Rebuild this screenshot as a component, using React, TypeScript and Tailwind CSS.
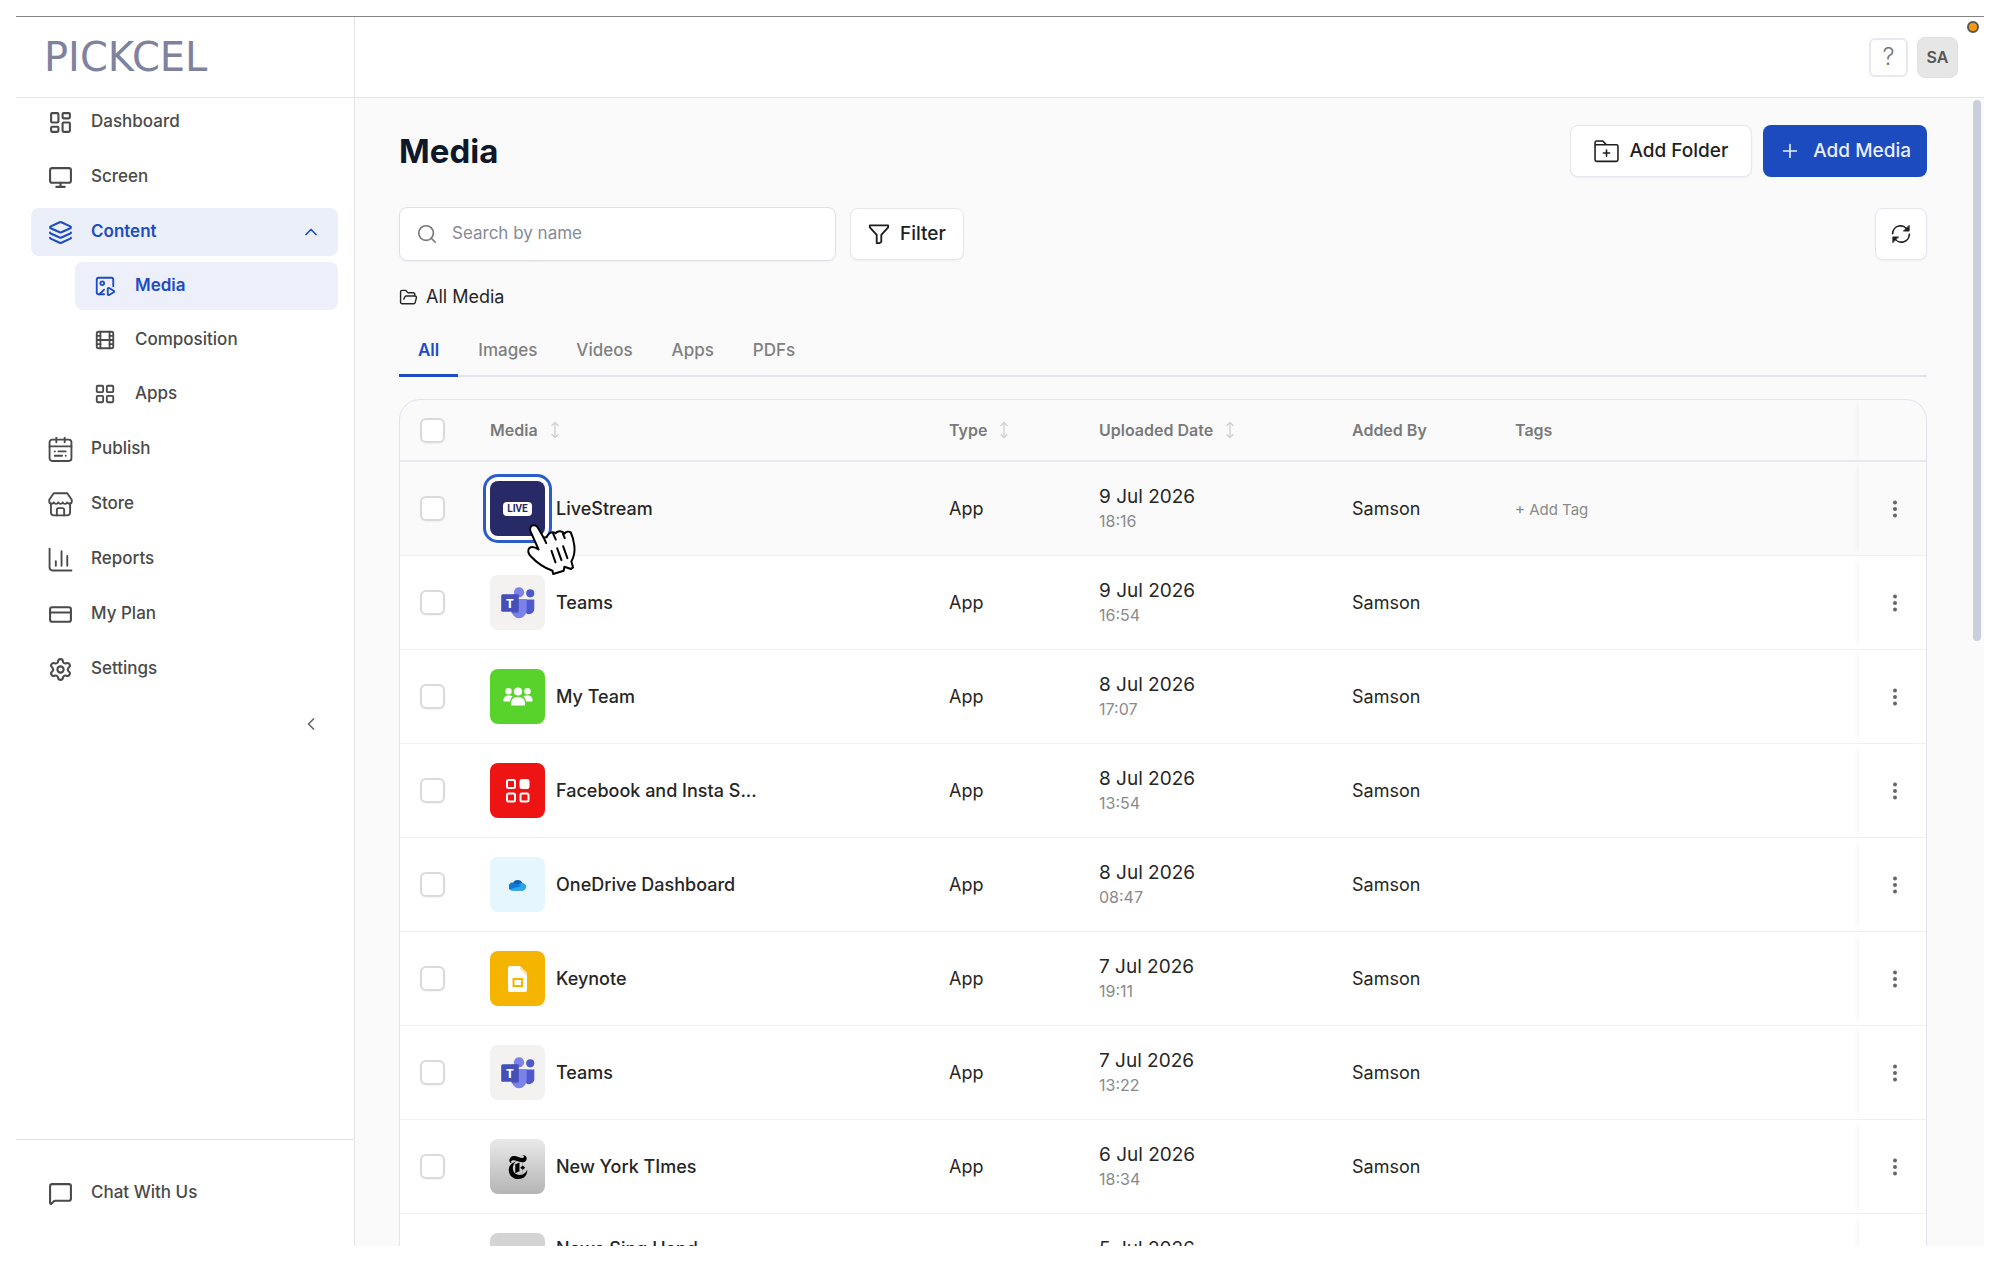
import type { ComponentType, ReactNode } from "react";
import {
  ChevronLeft,
  ChevronUp,
  CreditCard,
  Film,
  FolderOpen,
  ImagePlay,
  Layers,
  LayoutDashboard,
  LayoutGrid,
  MessageSquare,
  Monitor,
  MoveVertical,
  Plus,
  Search,
  Settings,
} from "lucide-react";
import { SiNewyorktimes } from "react-icons/si";

type IconProps = { className?: string };

const stroke = {
  viewBox: "0 0 24 24",
  fill: "none",
  stroke: "currentColor",
  strokeWidth: 2,
  strokeLinecap: "round",
  strokeLinejoin: "round",
} as const;

const PublishIcon = ({ className }: IconProps) => (
  <svg {...stroke} strokeWidth={1.8} className={className} aria-hidden="true">
    <rect x="1.5" y="2.5" width="21" height="20.5" rx="2.5" />
    <path d="M1.5 9h21M8 0v5M16 0v5M6.5 13.8h.1M10 13.8h7M6.5 18h7M17 18h.1" />
  </svg>
);

const StoreIcon = ({ className }: IconProps) => (
  <svg {...stroke} strokeWidth={1.8} className={className} aria-hidden="true">
    <path d="M2.8 11v8.5a3 3 0 0 0 3 3h12.4a3 3 0 0 0 3-3V11" />
    <path d="M5.5 1.2h13l4.3 6.3v1.7c0 2.6-3.4 2.6-4.3.8-.9 1.8-3.6 1.8-4.4 0-.8 1.8-3.4 1.8-4.2 0-.8 1.8-3.5 1.8-4.4 0-.9 1.8-4.3 1.8-4.3-.8V7.5z" />
    <path d="M8.5 22.5V17a1.500 1.500 0 0 1 1.500-1.500h4a1.500 1.500 0 0 1 1.500 1.500v5.500" />
  </svg>
);

const ReportsIcon = ({ className }: IconProps) => (
  <svg {...stroke} strokeWidth={1.8} className={className} aria-hidden="true">
    <path d="M1.5 1.5v18a3 3 0 0 0 3 3h18M7.5 13.5V18M13 4v14M18.5 8.5V18" />
  </svg>
);

const FolderPlusIcon = ({ className }: IconProps) => (
  <svg {...stroke} strokeWidth={1.5} className={className} aria-hidden="true">
    <path d="M1 6V3.5A1.500 1.500 0 0 1 2.500 2h6L12 5.500h9.500A1.500 1.500 0 0 1 23 7v13a1.500 1.500 0 0 1-1.500 1.500h-19A1.500 1.500 0 0 1 1 20zM1 5.500h11M12 10.500v6M9 13.500h6" />
  </svg>
);

const FunnelIcon = ({ className }: IconProps) => (
  <svg {...stroke} className={className} aria-hidden="true">
    <path d="M2 2.5h20v2.200l-7.500 8.300v7.500l-2 1.500h-3V13L2 4.700z" />
  </svg>
);

const RefreshIcon = ({ className }: IconProps) => (
  <svg {...stroke} className={className} aria-hidden="true">
    <path d="M2 11.5A9.500 9.500 0 0 1 20 7.500M22 12.500A9.500 9.500 0 0 1 4 16.500" />
    <path d="M21.8 2v6.500h-6.500zM2.200 22v-6.500h6.500z" fill="currentColor" strokeWidth={1} />
  </svg>
);

const DotsIcon = ({ className }: IconProps) => (
  <svg viewBox="0 0 20 20" fill="currentColor" className={className} aria-hidden="true">
    <circle cx="10" cy="3.6" r="2" />
    <circle cx="10" cy="10" r="2" />
    <circle cx="10" cy="16.4" r="2" />
  </svg>
);

const HandCursor = () => (
  <svg
    viewBox="405 390 160 170"
    className="pointer-events-none absolute top-10 left-[35px] z-10 h-[57px] w-[53px]"
    fill="#fff"
    stroke="#000"
    strokeWidth="6"
    strokeLinecap="round"
    strokeLinejoin="round"
    aria-hidden="true"
  >
    <path d="M430 402c-9 2-12 10-8 19l24 54c-9-6-20-10-27-5-8 7-4 18 4 26 16 17 42 35 65 43l2 10 32-10 2-12 20 7 6-5-5-18c8-14 11-30 9-47-2-18-6-30-11-41-5-3-14-3-19 4-7-9-19-10-27-1-9-6-20-3-27 12l-9 1-18-31c-3-5-7-7-13-6z" />
    <path d="M461 438l8 18M490 427l8 18M519 426l6 15M485 479l12 35M502 471l13 36M520 465l13 36" fill="none" />
  </svg>
);

const LiveArt = () => (
  <span className="rounded-sm bg-white px-1 font-['Liberation_Sans_Narrow','Roboto',sans-serif] text-[10px] leading-[14px] font-bold text-[#272a66]">
    LIVE
  </span>
);

const TeamsArt = () => (
  <svg viewBox="0 0 54 54" className="size-full" aria-hidden="true">
    <circle cx="39.5" cy="18" r="4" fill="#5059c9" />
    <path d="M35 24h8.500v9.500a5 5 0 0 1-8.500 3.500z" fill="#5059c9" />
    <circle cx="28.5" cy="17" r="5" fill="#7b83eb" />
    <path d="M21 23.500h15V34a7.500 8.500 0 0 1-15 0z" fill="#7b83eb" />
    <path d="M21 19h7.500v16.500a2 2 0 0 1-2 2H21z" fill="#343c9e" opacity=".45" />
    <rect x="11" y="19" width="17" height="17" rx="1.500" fill="#464eb8" />
    <text
      x="19.5"
      y="32"
      textAnchor="middle"
      fontSize="13"
      fontWeight="700"
      fill="#fff"
      fontFamily="Open Sans, sans-serif"
    >
      T
    </text>
  </svg>
);

const TeamArt = () => (
  <svg viewBox="0 0 30 19" className="h-[19px] w-[30px]" fill="#fff" aria-hidden="true">
    <circle cx="5.5" cy="4.300" r="3.200" />
    <circle cx="24.500" cy="4.300" r="3.200" />
    <circle cx="15" cy="4.500" r="4.100" />
    <path d="M.5 14.500v-1.700a4.300 4.300 0 0 1 4.300-4.300h2a4 4 0 0 1 2.800 1c-1.500 1.200-2.400 3-2.600 5z" />
    <path d="M29.500 14.500v-1.700a4.300 4.300 0 0 0-4.300-4.300h-2a4 4 0 0 0-2.800 1c1.500 1.200 2.400 3 2.600 5z" />
    <path d="M8 18.500v-2.500a6 6 0 0 1 6-6h2a6 6 0 0 1 6 6v2.500z" />
  </svg>
);

const GridArt = () => (
  <svg viewBox="0 0 24 24" className="size-6" fill="none" stroke="#fff" strokeWidth="2" aria-hidden="true">
    <rect x="1" y="1" width="8" height="8" rx="1.500" />
    <rect x="14.500" y="1" width="8" height="8" rx="1.500" fill="#fff" />
    <rect x="1" y="14.500" width="8" height="8" rx="1.500" />
    <rect x="14.500" y="14.500" width="8" height="8" rx="1.500" />
  </svg>
);

const OneDriveArt = () => (
  <svg viewBox="0 0 18 12" className="h-3 w-[18px]" aria-hidden="true">
    <path d="M3.500 11.500a3.500 3.500 0 0 1 .3-7A5.200 5.200 0 0 1 13.500 4a4 4 0 0 1 .5 7.500z" fill="#0a63b8" />
    <path d="M3.500 11.500c-1 0-2-.5-2.700-1.300L12 4.300c1-.4 2-.3 3 .3a3.600 3.600 0 0 1-.8 6.900z" fill="#28a8ea" />
    <path d="M5.800 4.800c1.500-.6 2.500-.2 3.500.5l3 1.800-11.500 3.200A3.500 3.500 0 0 1 5.800 4.800z" fill="#0f78d4" />
  </svg>
);

const KeynoteArt = () => (
  <svg viewBox="0 0 19 26" className="h-[26px] w-[19px]" aria-hidden="true">
    <path d="M2 0h10l7 7v17a2 2 0 0 1-2 2H2a2 2 0 0 1-2-2V2a2 2 0 0 1 2-2z" fill="#fff" />
    <path d="M12 0l7 7v3l-7-7z" fill="#f9dfa0" />
    <rect x="5.500" y="13" width="8.500" height="7" fill="none" stroke="#f5b400" strokeWidth="2" />
  </svg>
);

type MediaItem = {
  name: string;
  date: string;
  time: string;
  tile: string;
  art?: ReactNode;
  active?: boolean;
  twoLine?: boolean;
};

const media: MediaItem[] = [
  { name: "LiveStream", date: "9 Jul 2026", time: "18:16", tile: "bg-[#272a66]", art: <LiveArt />, active: true },
  { name: "Teams", date: "9 Jul 2026", time: "16:54", tile: "bg-[#f3f2f1]", art: <TeamsArt /> },
  { name: "My Team", date: "8 Jul 2026", time: "17:07", tile: "bg-[#58d32b]", art: <TeamArt /> },
  { name: "Facebook and Insta S...", date: "8 Jul 2026", time: "13:54", tile: "bg-[#ee1414]", art: <GridArt /> },
  { name: "OneDrive Dashboard", date: "8 Jul 2026", time: "08:47", tile: "bg-[#e5f6ff]", art: <OneDriveArt /> },
  { name: "Keynote", date: "7 Jul 2026", time: "19:11", tile: "bg-[#f5b400]", art: <KeynoteArt /> },
  { name: "Teams", date: "7 Jul 2026", time: "13:22", tile: "bg-[#f3f2f1]", art: <TeamsArt /> },
  {
    name: "New York TImes",
    date: "6 Jul 2026",
    time: "18:34",
    tile: "bg-linear-to-b from-[#e9e9e9] to-[#b5b5b5]",
    art: <SiNewyorktimes className="size-6 text-black" />,
  },
  { name: "News Sing Hand", date: "5 Jul 2026", time: "", tile: "bg-[#d4d4d4]", twoLine: true },
];

type NavLinkProps = {
  label: string;
  icon: ComponentType<IconProps>;
  active?: boolean;
};

const NavLink = ({ label, icon: Icon, active }: NavLinkProps) => (
  <a
    href="#"
    className={`flex h-12 items-center gap-[18px] rounded-lg px-[17px] ${
      active ? "bg-[#ebeffa] font-semibold text-[#1d4cc4]" : "font-medium text-[#4a4a4a]"
    }`}
  >
    <Icon className="size-[25px]" />
    {label}
    {active && <ChevronUp className="ml-auto size-5" />}
  </a>
);

const SubLink = ({ label, icon: Icon, active }: NavLinkProps) => (
  <a
    href="#"
    className={`ml-11 flex h-12 items-center gap-[19px] rounded-lg px-[19px] ${
      active ? "bg-[#edeffa] font-semibold text-[#1d4cc4]" : "font-medium text-[#4a4a4a]"
    }`}
  >
    <Icon className="size-[22px]" />
    {label}
  </a>
);

const Sidebar = () => (
  <aside className="flex w-[339px] shrink-0 flex-col border-r border-[#e3e3ee] bg-white">
    <div className="flex h-[81px] items-center border-b border-[#e3e3ee] px-7 font-['DejaVu_Sans',sans-serif] text-[40px] text-[#7f829e]">
      PICKCEL
    </div>
    <nav className="flex flex-1 flex-col gap-[7px] pr-4 pl-[15px] text-[17px]">
      <NavLink label="Dashboard" icon={LayoutDashboard} />
      <NavLink label="Screen" icon={Monitor} />
      <div className="flex flex-col gap-1.5">
        <NavLink label="Content" icon={Layers} active />
        <SubLink label="Media" icon={ImagePlay} active />
        <SubLink label="Composition" icon={Film} />
        <SubLink label="Apps" icon={LayoutGrid} />
      </div>
      <NavLink label="Publish" icon={PublishIcon} />
      <NavLink label="Store" icon={StoreIcon} />
      <NavLink label="Reports" icon={ReportsIcon} />
      <NavLink label="My Plan" icon={CreditCard} />
      <NavLink label="Settings" icon={Settings} />
      <button
        type="button"
        aria-label="Collapse sidebar"
        className="flex h-12 items-center justify-end px-[17px] text-[#666]"
      >
        <ChevronLeft className="size-5" />
      </button>
    </nav>
    <div className="border-t border-[#e3e3ee] px-[15px] py-[29px] text-[17px]">
      <NavLink label="Chat With Us" icon={MessageSquare} />
    </div>
  </aside>
);

const outlineButton =
  "flex h-[52px] items-center justify-center rounded-lg border border-[#e6e6ee] bg-white font-medium text-[#1f1f1f] shadow-xs";

const Toolbar = () => (
  <>
    <div className="flex items-center justify-between">
      <h1 className="text-[33px] leading-[52px] font-bold text-[#0f172a]">Media</h1>
      <div className="flex gap-[11px] text-[19px]">
        <button type="button" className={`${outlineButton} gap-2.5 px-[23px]`}>
          <FolderPlusIcon className="size-[25px]" />
          Add Folder
        </button>
        <button
          type="button"
          className="flex h-[52px] items-center gap-3 rounded-lg bg-[#1b4bbf] px-4 font-medium text-[#e9effc]"
        >
          <Plus className="size-[22px]" strokeWidth={1.8} />
          Add Media
        </button>
      </div>
    </div>

    <div className="mt-[30px] flex items-center gap-3.5">
      <label className="flex h-[54px] w-[437px] items-center gap-3.5 rounded-lg border border-[#e0e0ea] bg-white px-4 shadow-xs">
        <Search className="size-[22px] text-[#777]" strokeWidth={1.8} />
        <input
          type="text"
          aria-label="Search by name"
          placeholder="Search by name"
          className="min-w-0 flex-1 text-[17px] outline-none placeholder:text-[#858b98]"
        />
      </label>
      <button type="button" className={`${outlineButton} gap-2.5 px-[17px] text-[19px]`}>
        <FunnelIcon className="size-[22px]" />
        Filter
      </button>
      <button type="button" aria-label="Refresh" className={`${outlineButton} ml-auto w-[52px]`}>
        <RefreshIcon className="size-5" />
      </button>
    </div>

    <div className="mt-[22px] flex h-7 items-center gap-2 text-lg text-[#262626]">
      <FolderOpen className="size-[19px]" strokeWidth={1.8} />
      All Media
    </div>

    <div role="tablist" className="mt-4 flex gap-px border-b-2 border-[#e3e3ee] text-[17px] font-medium text-[#808080]">
      {["All", "Images", "Videos", "Apps", "PDFs"].map((tab) => (
        <button
          key={tab}
          type="button"
          role="tab"
          aria-selected={tab === "All"}
          className={`-mb-0.5 h-[50px] border-b-[3px] px-[19px] ${
            tab === "All" ? "border-[#1d4cc4] font-semibold text-[#1d4cc4]" : "border-transparent"
          }`}
        >
          {tab}
        </button>
      ))}
    </div>
  </>
);

const Checkbox = ({ label }: { label: string }) => (
  <input
    type="checkbox"
    aria-label={label}
    className="block size-[25px] appearance-none rounded-md border-2 border-[#dadada] bg-white shadow-xs"
  />
);

const HeadCell = ({ label, sortable }: { label: string; sortable?: boolean }) => (
  <th scope="col" className="border-b-2 border-[#e8e8f0] px-5 text-left font-semibold">
    <span className="flex items-center gap-2">
      {label}
      {sortable && <MoveVertical className="size-[18px] text-[#d0d0d0]" strokeWidth={1.8} />}
    </span>
  </th>
);

const stickyShadow = "shadow-[-5px_0_6px_-4px_rgba(0,0,0,0.06)]";

const MediaTable = () => (
  <div className="mt-[22px] overflow-hidden rounded-t-[21px] border border-b-0 border-[#e3e3ee]">
    <table className="w-full table-fixed border-separate border-spacing-0 text-lg text-[#262626]">
      <colgroup>
        <col className="w-[70px]" />
        <col className="w-[459px]" />
        <col className="w-[150px]" />
        <col className="w-[253px]" />
        <col className="w-[163px]" />
        <col />
        <col className="w-[67px]" />
      </colgroup>
      <thead>
        <tr className="h-[62px] text-base text-[#7a7a7a]">
          <th className="border-b-2 border-[#e8e8f0] px-5">
            <Checkbox label="Select all media" />
          </th>
          <HeadCell label="Media" sortable />
          <HeadCell label="Type" sortable />
          <HeadCell label="Uploaded Date" sortable />
          <HeadCell label="Added By" />
          <HeadCell label="Tags" />
          <th className={`border-b-2 border-[#e8e8f0] ${stickyShadow}`} />
        </tr>
      </thead>
      <tbody>
        {media.map((item, i) => (
          <tr
            key={i}
            className={`h-[94px] *:border-b *:border-[#f0f0f2] *:px-5 *:py-0 ${item.active ? "bg-[#fafafa]" : "bg-white"}`}
          >
            <td>
              <Checkbox label={`Select ${item.name}`} />
            </td>
            <td>
              <div className="flex items-center gap-[11px] font-medium">
                <div className="relative">
                  <div
                    className={`flex size-[55px] items-center justify-center rounded-lg ${item.tile} ${
                      item.active ? "ring-3 ring-[#2c5cc9] ring-offset-4" : ""
                    }`}
                  >
                    {item.art}
                  </div>
                  {item.active && <HandCursor />}
                </div>
                <span className={item.twoLine ? "pb-6 leading-6" : "leading-6"}>{item.name}</span>
              </div>
            </td>
            <td>App</td>
            <td>
              <div className="h-6 text-[19px] leading-6">{item.date}</div>
              <div className="h-6 text-base leading-6 text-[#8a8a8a]">{item.time}</div>
            </td>
            <td>Samson</td>
            <td>
              {item.active && (
                <button type="button" className="text-[15px] text-[#8a8a8a]">
                  + Add Tag
                </button>
              )}
            </td>
            <td className={stickyShadow}>
              <button type="button" aria-label={`Actions for ${item.name}`} className="block px-1.5 text-[#666]">
                <DotsIcon className="size-5" />
              </button>
            </td>
          </tr>
        ))}
      </tbody>
    </table>
  </div>
);

export default function App() {
  return (
    <div className="h-screen bg-white p-4 font-['Inter',sans-serif]">
      <div className="relative flex h-full overflow-hidden border-t border-[#858585]">
        <span className="absolute top-1 right-[5px] size-3 rounded-full border-2 border-[#555] bg-[#f99b0c]" />
        <Sidebar />
        <div className="flex min-w-0 flex-1 flex-col">
          <header className="flex h-[81px] shrink-0 items-center justify-end gap-[9px] border-b border-[#e3e3ee] pr-[26px]">
            <button
              type="button"
              aria-label="Help"
              className="size-[39px] rounded-md border-2 border-[#e8e8f0] text-2xl leading-8 font-light text-[#777]"
            >
              ?
            </button>
            <button
              type="button"
              className="size-[41px] rounded-lg border border-[#dfdfe8] bg-[#e6e6e6] text-base font-semibold text-[#555]"
            >
              SA
            </button>
          </header>
          <div className="flex min-h-0 flex-1 bg-[#fafafa]">
            <main className="min-w-0 flex-1 overflow-hidden pt-[27px] pr-[46px] pl-11">
              <Toolbar />
              <MediaTable />
            </main>
            <div className="mt-0.5 mr-[3px] h-[541px] w-2 rounded-full bg-[#cbcfdc]" />
          </div>
        </div>
      </div>
    </div>
  );
}
